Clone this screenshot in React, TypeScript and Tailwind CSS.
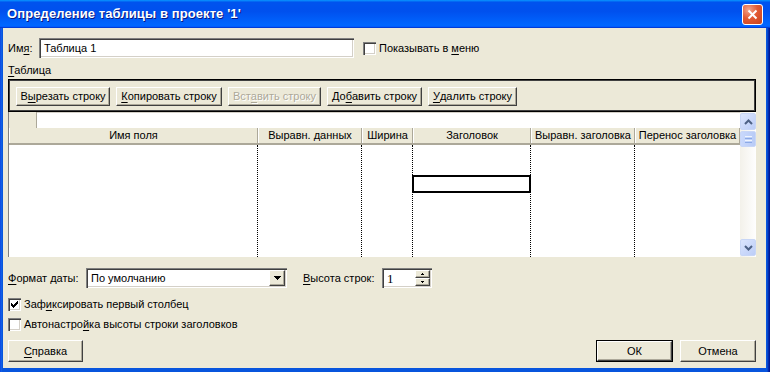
import React from "react";

function U({ children }: { children: React.ReactNode }) {
  return <span className="underline underline-offset-[2px] decoration-1">{children}</span>;
}

const sunken =
  "shadow-[inset_1px_1px_0_#808080,inset_2px_2px_0_#404040,inset_-1px_-1px_0_#ffffff,inset_-2px_-2px_0_#d4d0c8]";

function Btn({
  children,
  className,
  disabled,
}: {
  children: React.ReactNode;
  className: string;
  disabled?: boolean;
}) {
  return (
    <div
      className={`flex items-center justify-center bg-[#ece9d8] border border-t-white border-l-white border-r-[#404040] border-b-[#404040] shadow-[inset_-1px_-1px_0_#aca899] ${
        disabled ? "text-[#aca899] [text-shadow:1px_1px_0_#ffffff]" : "text-black"
      } ${className}`}
    >
      {children}
    </div>
  );
}

function Check({ checked }: { checked?: boolean }) {
  return (
    <div className={`w-[13px] h-[13px] bg-white flex items-center justify-center shrink-0 ${sunken}`}>
      {checked && (
        <svg width="7" height="7" viewBox="0 0 7 7" shapeRendering="crispEdges">
          <rect x="6" y="0" width="1" height="1" fill="#000" />
          <rect x="5" y="1" width="2" height="1" fill="#000" />
          <rect x="0" y="2" width="1" height="1" fill="#000" />
          <rect x="4" y="2" width="3" height="1" fill="#000" />
          <rect x="0" y="3" width="2" height="1" fill="#000" />
          <rect x="3" y="3" width="3" height="1" fill="#000" />
          <rect x="0" y="4" width="5" height="1" fill="#000" />
          <rect x="1" y="5" width="3" height="1" fill="#000" />
          <rect x="2" y="6" width="1" height="1" fill="#000" />
        </svg>
      )}
    </div>
  );
}

function ScrollBtn({ up }: { up?: boolean }) {
  return (
    <div className="h-[17px] w-[16px] rounded-[2px] border border-[#c8d6f6] bg-[linear-gradient(135deg,#dbe5fd,#bccdf7)] flex items-center justify-center">
      <svg width="9" height="6" viewBox="0 0 9 6">
        <path
          d={up ? "M1 5 L4.5 1.5 L8 5" : "M1 1 L4.5 4.5 L8 1"}
          stroke="#4d6185"
          strokeWidth="2"
          fill="none"
        />
      </svg>
    </div>
  );
}

function Tri({ down, w, h }: { down?: boolean; w: number; h: number }) {
  return (
    <svg width={w} height={h} viewBox={`0 0 ${w} ${h}`} shapeRendering="crispEdges">
      <path d={down ? `M0 0 L${w} 0 L${w / 2} ${h} Z` : `M0 ${h} L${w} ${h} L${w / 2} 0 Z`} fill="#000" />
    </svg>
  );
}

const cols = [
  { name: "Имя поля", w: "w-[249px]" },
  { name: "Выравн. данных", w: "w-[104px]" },
  { name: "Ширина", w: "w-[51px]" },
  { name: "Заголовок", w: "w-[118px]" },
  { name: "Выравн. заголовка", w: "w-[104px]" },
  { name: "Перенос заголовка", w: "w-[105px]" },
];

export default function App() {
  return (
    <div className="w-[770px] h-[372px] flex flex-col bg-[#0b4be0] font-['Liberation_Sans',Arial,sans-serif] text-[11px] text-black overflow-hidden">
      {/* Title bar */}
      <div className="h-[28px] shrink-0 flex items-center bg-[linear-gradient(180deg,#0997ff,#0053ee_8%,#0050ee_40%,#0066ff_88%,#0066ff_93%,#005bff_95%,#003dd7_96%,#003dd7)]">
        <div className="pl-[7px] text-white font-bold text-[13px] [text-shadow:1px_1px_0_#0a1883] tracking-[0.1px]">
          Определение таблицы в проекте '1'
        </div>
        <div className="ml-auto mr-[7px] w-[21px] h-[21px] rounded-[3px] border border-white bg-[radial-gradient(circle_at_30%_25%,#f3a58d,#e25a34_45%,#c6421d)] flex items-center justify-center">
          <svg width="11" height="11" viewBox="0 0 11 11">
            <path d="M1.5 1.5 L9.5 9.5 M9.5 1.5 L1.5 9.5" stroke="#fff" strokeWidth="2" />
          </svg>
        </div>
      </div>

      {/* Body with frame */}
      <div className="flex-1 flex pl-[3px] pr-[4px] pb-[4px] bg-[linear-gradient(90deg,#0831d9,#166aee_1px,#0855dd_2px,#0855dd_calc(100%-3px),#001ea0_calc(100%-1px),#00138c)]">
        <div className="flex-1 bg-[#ece9d8] pl-[5px] flex flex-col">
          {/* Row 1 */}
          <div className="mt-[10px] h-[20px] flex items-center">
            <div className="w-[31px]">
              Им<U>я</U>:
            </div>
            <div className={`w-[315px] h-[20px] bg-white flex items-center pl-[5px] ${sunken}`}>Таблица 1</div>
            <div className="ml-[9px] flex items-center gap-[3px]">
              <Check />
              <span>
                Показывать в <U>м</U>еню
              </span>
            </div>
          </div>

          <div className="mt-[5px] h-[14px] leading-[14px]">
            <U>Т</U>аблица
          </div>

          {/* Toolbar */}
          <div className="mt-[2px] w-[748px] h-[33px] border border-black shadow-[inset_1px_1px_0_#404040,inset_-1px_-1px_0_#404040] flex items-start pt-[7px] pl-[7px] gap-[6px]">
            <Btn className="w-[94px] h-[19px]">
              В<U>ы</U>резать строку
            </Btn>
            <Btn className="w-[106px] h-[19px]">
              <U>К</U>опировать строку
            </Btn>
            <Btn className="w-[93px] h-[19px]" disabled>
              Вст<U>а</U>вить строку
            </Btn>
            <Btn className="w-[95px] h-[19px]">
              До<U>б</U>авить строку
            </Btn>
            <Btn className="w-[89px] h-[19px]">
              <U>У</U>далить строку
            </Btn>
          </div>

          {/* Grid */}
          <div className="w-[748px] h-[145px] flex border-l border-[#808080]">
            <div className="w-[731px] flex flex-col">
              <div className="h-[16px] flex">
                <div className="w-[28px] bg-[#ece9d8] border-r border-[#aca899]" />
                <div className="flex-1 bg-white border-t border-[#d4d0c8]" />
              </div>
              <div className="h-[17px] flex bg-[#ece9d8] border-b-2 border-[#aca899]">
                {cols.map((c) => (
                  <div
                    key={c.name}
                    className={`${c.w} h-full flex items-center justify-center border-l border-white border-r border-r-[#aca899] leading-none`}
                  >
                    {c.name}
                  </div>
                ))}
              </div>
              <div className="flex-1 flex bg-white">
                {cols.map((c, i) => (
                  <div
                    key={c.name}
                    className={`${c.w} h-full ${i < 5 ? "border-r border-dotted border-black" : ""}`}
                  >
                    {i === 3 && <div className="mt-[30px] -ml-[1px] -mr-[1px] h-[18px] border-2 border-black bg-white" />}
                  </div>
                ))}
              </div>
            </div>
            <div className="w-[16px] flex flex-col bg-[linear-gradient(90deg,#f3f1ea,#fefefe)]">
              <div className="mt-[1px]">
                <ScrollBtn up />
              </div>
              <div className="mt-[1px] h-[16px] w-[16px] rounded-[2px] border border-[#c8d6f6] bg-[linear-gradient(90deg,#c9d8fc,#b8cbf6)] flex flex-col items-center justify-center gap-[1px]">
                <div className="w-[7px] h-[1px] bg-[#eef4fe]" />
                <div className="w-[7px] h-[1px] bg-[#8caae6]" />
                <div className="w-[7px] h-[1px] bg-[#eef4fe]" />
                <div className="w-[7px] h-[1px] bg-[#8caae6]" />
              </div>
              <div className="mt-auto mb-[1px]">
                <ScrollBtn />
              </div>
            </div>
          </div>

          {/* Format row */}
          <div className="mt-[11px] h-[20px] flex items-center">
            <div className="w-[78px]">
              <U>Ф</U>ормат даты:
            </div>
            <div className={`w-[201px] h-[20px] bg-white flex items-center pl-[5px] pr-[2px] ${sunken}`}>
              <span className="flex-1">По умолчанию</span>
              <Btn className="w-[16px] h-[16px]">
                <Tri down w={7} h={4} />
              </Btn>
            </div>
            <div className="ml-[16px] w-[79px]">
              <U>В</U>ысота строк:
            </div>
            <div className={`w-[50px] h-[20px] bg-white flex items-center pl-[2px] pr-[2px] ${sunken}`}>
              <span className="flex-1 pl-[3px] font-['Liberation_Serif',serif] text-[13px] leading-none">1</span>
              <div className="flex flex-col">
                <Btn className="w-[15px] h-[8px]">
                  <Tri w={3} h={2} />
                </Btn>
                <Btn className="w-[15px] h-[8px]">
                  <Tri down w={3} h={2} />
                </Btn>
              </div>
            </div>
          </div>

          <div className="mt-[8px] h-[16px] flex items-center gap-[3px]">
            <Check checked />
            <span>
              Заф<U>и</U>ксировать первый столбец
            </span>
          </div>
          <div className="mt-[4px] h-[16px] flex items-center gap-[3px]">
            <Check />
            <span>
              Автонастро<U>й</U>ка высоты строки заголовков
            </span>
          </div>

          <div className="mt-[8px] w-[748px] h-[22px] flex items-center">
            <Btn className="w-[75px] h-[22px]">
              <U>С</U>правка
            </Btn>
            <div className="ml-auto w-[77px] h-[22px] border border-black flex">
              <Btn className="w-[75px] h-[20px]">ОК</Btn>
            </div>
            <Btn className="ml-[7px] w-[76px] h-[22px]">Отмена</Btn>
          </div>
        </div>
      </div>
    </div>
  );
}
